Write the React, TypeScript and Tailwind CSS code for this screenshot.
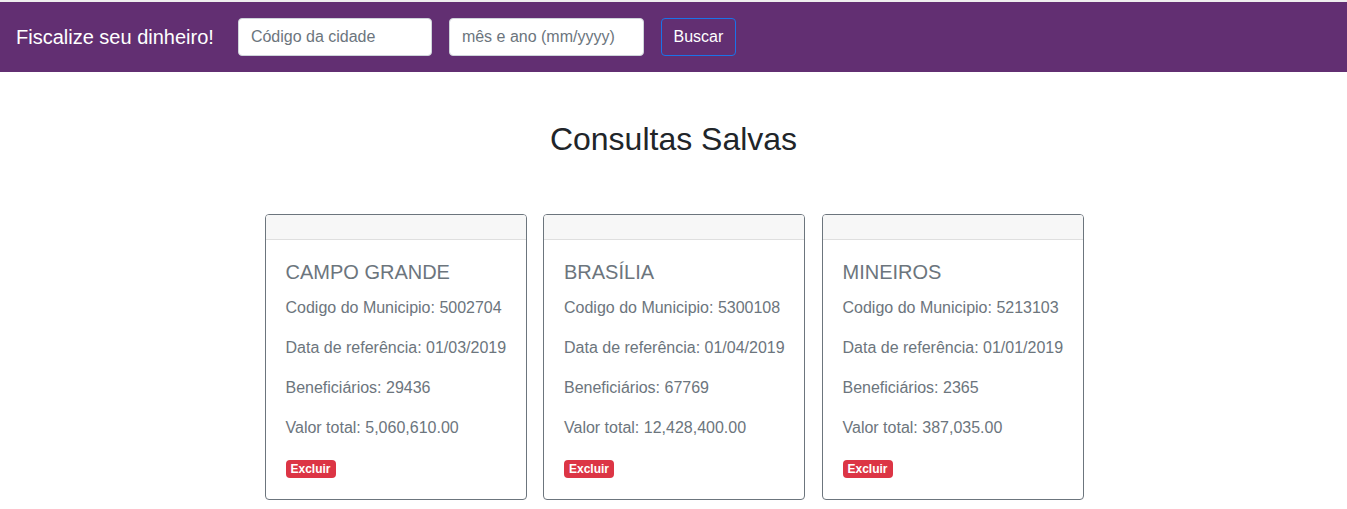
const consultas = [
  { cidade: "CAMPO GRANDE", codigo: "5002704", data: "01/03/2019", beneficiarios: "29436", valor: "5,060,610.00" },
  { cidade: "BRASÍLIA", codigo: "5300108", data: "01/04/2019", beneficiarios: "67769", valor: "12,428,400.00" },
  { cidade: "MINEIROS", codigo: "5213103", data: "01/01/2019", beneficiarios: "2365", valor: "387,035.00" },
];

function ConsultaCard({ cidade, codigo, data, beneficiarios, valor }: (typeof consultas)[number]) {
  return (
    <div className="w-[262px] rounded-[4px] border border-[#6c757d] bg-white">
      {/* cabeçalho vazio */}
      <div className="h-[25px] border-b border-[#dfdfdf] bg-[#f7f7f7] rounded-t-[3px]" />
      <div className="whitespace-nowrap px-5 pt-5 pb-[19px] text-[#6c757d]">
        <h5 className="mb-3 text-[20px] leading-6">{cidade}</h5>
        <p className="mb-4 text-base leading-6">Codigo do Municipio: {codigo}</p>
        <p className="mb-4 text-base leading-6">Data de referência: {data}</p>
        <p className="mb-4 text-base leading-6">Beneficiários: {beneficiarios}</p>
        <p className="mb-4 text-base leading-6">Valor total: {valor}</p>
        <div className="flex h-6 items-center pt-[2px]">
          <span className="flex h-[18px] items-center rounded-[4px] bg-[#dc3545] px-[5px] text-[12px] font-bold text-white">
            Excluir
          </span>
        </div>
      </div>
    </div>
  );
}

export default function App() {
  return (
    <div className="min-h-[509px] bg-white font-['Liberation_Sans',Arial,sans-serif] text-[#212529]">
      <div className="h-[2px] bg-[#eeeeee]" />
      {/* barra de busca */}
      <nav className="flex h-[70px] items-center bg-[#622f72] px-4">
        <span className="mr-6 text-[20px] text-white">Fiscalize seu dinheiro!</span>
        <input
          placeholder="Código da cidade"
          className="h-[38px] w-[194px] rounded-[4px] border border-[#ced4da] bg-white px-3 text-base text-[#495057] placeholder:text-[#6c757d] outline-none"
        />
        <input
          placeholder="mês e ano (mm/yyyy)"
          className="ml-[17px] h-[38px] w-[195px] rounded-[4px] border border-[#ced4da] bg-white px-3 text-base text-[#495057] placeholder:text-[#6c757d] outline-none"
        />
        <button className="ml-[17px] h-[38px] w-[75px] rounded-[4px] border border-[#1a73e8] text-base text-white">
          Buscar
        </button>
      </nav>

      <h2 className="mt-12 text-center text-[32px] leading-[38px]">Consultas Salvas</h2>

      <div className="mt-14 flex justify-center gap-[16.5px] pl-[1px]">
        {consultas.map((c) => (
          <ConsultaCard key={c.codigo} {...c} />
        ))}
      </div>
    </div>
  );
}
